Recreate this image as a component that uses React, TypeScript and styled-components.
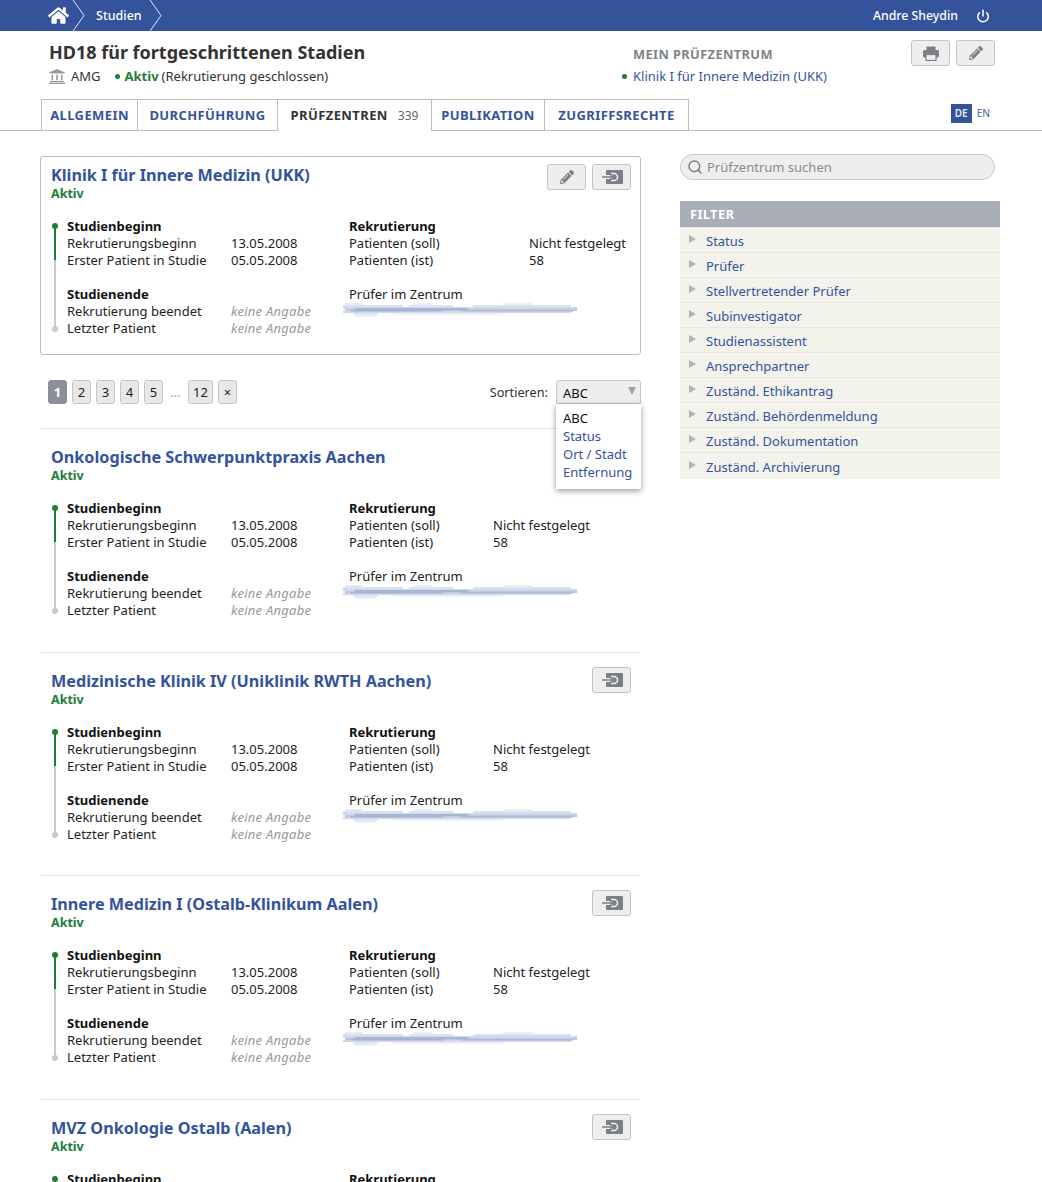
import React from "react";
import styled, { createGlobalStyle } from "styled-components";
import { FaHome, FaPencilAlt } from "react-icons/fa";
import { Power, Search } from "lucide-react";

const blue = "#34539b";
const green = "#1f7d34";

const GlobalStyle = createGlobalStyle`
  html, body { margin: 0; padding: 0; background: #fff; }
  body {
    font-family: "Noto Sans", "Liberation Sans", sans-serif;
    font-size: 13px;
    line-height: 17px;
    color: #222;
    overflow: hidden;
    height: 1182px;
  }
`;

const TopBar = styled.header`
  height: 31px;
  background: ${blue};
  color: #fff;
  display: flex;
  align-items: center;
  justify-content: space-between;
  padding: 0 52px 0 48px;
`;

const Crumbs = styled.nav`
  display: flex;
  align-items: center;
  height: 100%;
`;

const Crumb = styled.span`
  font-size: 12.5px;
  font-weight: 500;
  margin: 0 7px 0 11px;
`;

const Chevron = () => (
  <svg width="13" height="31" viewBox="0 0 13 31" fill="none" stroke="#e4e9f3" strokeWidth="1">
    <path d="M1 0 L12 15.5 L1 31" />
  </svg>
);

const UserBox = styled.div`
  display: flex;
  align-items: center;
  gap: 18px;
  font-size: 12.3px;
  font-weight: 500;
`;

const Head = styled.section`
  display: flex;
  height: 68px;
  padding: 9px 47px 0 49px;
  box-sizing: border-box;
`;

const HeadMain = styled.div`
  width: 573px;
`;

const Title = styled.h1`
  margin: 0;
  font-size: 18px;
  line-height: 24px;
  font-weight: 700;
  color: #333;
`;

const Meta = styled.div`
  display: flex;
  align-items: center;
  margin-top: 4px;
  height: 17px;
  color: #333;
`;

const Dot = styled.i`
  display: inline-block;
  width: 5px;
  height: 5px;
  border-radius: 50%;
  background: ${green};
  margin-right: 5px;
`;

const Amg = styled.span`
  margin: 0 14px 0 6px;
`;

const Active = styled.b`
  color: ${green};
  font-weight: 700;
  margin-right: 3px;
`;

const Center = styled.div`
  padding-top: 6px;
`;

const CenterLabel = styled.div`
  padding-left: 11px;
  font-weight: 700;
  font-size: 12.8px;
  letter-spacing: 0.4px;
  color: #7f8487;
`;

const CenterLink = styled.div`
  margin-top: 5px;
  display: flex;
  align-items: center;
  color: ${blue};

  ${Dot} {
    margin-right: 6px;
  }
`;

const Actions = styled.div`
  display: flex;
  gap: 6px;
`;

const HeadActions = styled(Actions)`
  margin-left: auto;
  margin-top: 0;
`;

const IconButton = styled.button`
  width: 39px;
  height: 26px;
  padding: 0;
  display: flex;
  align-items: center;
  justify-content: center;
  background: #eee;
  border: 1px solid #c4c4c4;
  border-radius: 3px;
  color: #7b7f88;
`;

const TabRow = styled.div`
  display: flex;
  justify-content: space-between;
  align-items: flex-start;
  height: 32px;
  padding: 0 52px 0 41px;
  border-bottom: 1px solid #bdbdbd;
  box-sizing: border-box;
`;

const Tabs = styled.nav`
  display: flex;
  align-items: flex-start;
`;

const Tab = styled.div<{ $active?: boolean; $w: number }>`
  width: ${(p) => p.$w}px;
  height: ${(p) => (p.$active ? 32 : 31)}px;
  box-sizing: border-box;
  border: 1px solid #bdbdbd;
  border-left-width: 0;
  border-bottom: 0;
  background: #fff;
  color: ${(p) => (p.$active ? "#333" : blue)};
  font-weight: 700;
  font-size: 13px;
  letter-spacing: 0.4px;
  display: flex;
  align-items: center;
  justify-content: center;
  padding-bottom: ${(p) => (p.$active ? 1 : 0)}px;
  white-space: nowrap;

  &:first-child {
    border-left-width: 1px;
  }

  small {
    font-size: 12px;
    font-weight: 400;
    color: #666;
    margin-left: 10px;
    letter-spacing: 0;
  }
`;

const Lang = styled.div`
  display: flex;
  align-items: center;
  gap: 5px;
  margin-top: 5px;
  font-size: 10px;
  font-weight: 500;
  color: #5d73a9;
`;

const LangActive = styled.span`
  width: 21px;
  height: 19px;
  line-height: 19px;
  text-align: center;
  font-weight: 600;
  background: ${blue};
  color: #e9ecf5;
`;

const Body = styled.main`
  display: grid;
  grid-template-columns: 601px 320px;
  column-gap: 39px;
  padding: 25px 0 0 40px;
`;

const Featured = styled.article`
  height: 199px;
  box-sizing: border-box;
  border: 1px solid #bcbcbc;
  border-radius: 3px;
  padding: 7px 9px 0 10px;
`;

const ListItem = styled.article`
  margin-left: 1px;
  width: 599px;
  height: 223.67px;
  box-sizing: border-box;
  border-top: 1px solid #e3e3e3;
  padding: 14px 9px 0 10px;
`;

const SiteHead = styled.div<{ $featured?: boolean }>`
  display: flex;
  justify-content: space-between;
  height: ${(p) => (p.$featured ? 21 : 24)}px;
`;

const SiteTitle = styled.h2<{ $featured?: boolean }>`
  margin: 0;
  font-size: 16.2px;
  line-height: 22px;
  padding-top: ${(p) => (p.$featured ? 0 : 3)}px;
  font-weight: 700;
  color: ${blue};
`;

const Status = styled.div`
  height: 17px;
  font-weight: 700;
  font-size: 12.5px;
  color: ${green};
`;

const Columns = styled.div`
  display: flex;
  margin-top: 16px;
  height: 118px;
`;

const Timeline = styled.svg`
  width: 8px;
  height: 114px;
  flex: none;
  margin-right: 8px;
`;

const Col = styled.div<{ $w: number }>`
  width: ${(p) => p.$w}px;
  flex: none;
`;

const Rows = styled.div<{ $first: number }>`
  display: grid;
  grid-template-columns: ${(p) => p.$first}px 1fr;
  grid-auto-rows: 17px;
  white-space: nowrap;

  & + & {
    margin-top: 17px;
  }
`;

const RowHead = styled.strong`
  grid-column: 1 / 3;
  font-weight: 700;
  color: #111;
`;

const RowCaption = styled.span`
  grid-column: 1 / 3;
`;

const Muted = styled.em`
  color: #999;
  font-style: italic;
  letter-spacing: 0.25px;
`;

const Redacted = styled.svg`
  display: block;
  width: 238px;
  height: 14px;
  margin: 0 0 0 -6px;
  filter: blur(0.7px);
`;

const Pager = styled.div`
  display: flex;
  align-items: flex-start;
  justify-content: space-between;
  height: 73px;
  box-sizing: border-box;
  padding: 25px 0 0 8px;
  position: relative;
`;

const Pages = styled.div`
  display: flex;
  gap: 5px;
  align-items: center;
`;

const Page = styled.span<{ $active?: boolean; $w?: number }>`
  width: ${(p) => p.$w || 19}px;
  height: 24px;
  box-sizing: border-box;
  display: flex;
  align-items: center;
  justify-content: center;
  border-radius: 3px;
  border: 1px solid ${(p) => (p.$active ? "#8b8f9a" : "#c6c6c6")};
  background: ${(p) => (p.$active ? "#8b8f9a" : "#e8e8e8")};
  color: ${(p) => (p.$active ? "#fff" : "#222")};
  font-weight: ${(p) => (p.$active ? 700 : 400)};
`;

const Ellipsis = styled.span`
  color: #999;
  width: 15px;
  text-align: center;
  padding-top: 1px;
`;

const SortBox = styled.div`
  display: flex;
  align-items: center;
  gap: 8px;
  font-size: 12.7px;
  color: #333;
`;

const Select = styled.div`
  width: 85px;
  height: 24px;
  box-sizing: border-box;
  border: 1px solid #c6c6c6;
  border-radius: 3px 3px 0 0;
  background: #eee;
  padding: 4px 0 0 6px;
  font-size: 13px;
  color: #111;
  position: relative;

  &::after {
    content: "";
    position: absolute;
    right: 4px;
    top: 6px;
    border-left: 4px solid transparent;
    border-right: 4px solid transparent;
    border-top: 8px solid #a4a4a4;
  }
`;

const Menu = styled.ul`
  position: absolute;
  right: 0;
  top: 49px;
  width: 85px;
  height: 85px;
  box-sizing: border-box;
  margin: 0;
  padding: 5px 0 0 7px;
  list-style: none;
  background: #fff;
  color: ${blue};
  line-height: 18px;
  white-space: nowrap;
  box-shadow: 0 2px 6px rgba(0, 0, 0, 0.4);
  z-index: 2;
`;

const MenuCurrent = styled.li`
  color: #111;
`;

const Side = styled.aside``;

const SearchBox = styled.div`
  width: 315px;
  height: 26px;
  margin-top: -2px;
  box-sizing: border-box;
  border: 1px solid #c8c8c8;
  border-radius: 13px;
  background: #eee;
  display: flex;
  align-items: center;
  gap: 4px;
  padding-left: 6px;
  color: #8a8a8a;
`;

const FilterHead = styled.div`
  margin-top: 21px;
  height: 26px;
  line-height: 27px;
  background: #a9aeb9;
  border-bottom: 1px solid #e7e7e4;
  color: #fff;
  font-weight: 700;
  padding-left: 10px;
  letter-spacing: 0.3px;
`;

const FilterRow = styled.div`
  height: 25px;
  box-sizing: border-box;
  border-bottom: 1px solid #e7e7e4;
  background: #f3f2eb;
  color: ${blue};
  display: flex;
  align-items: center;
  padding: 2px 0 0 9px;
  gap: 10px;

  &:last-child {
    height: 26px;
    border-bottom: 0;
  }

  &::before {
    content: "";
    border-top: 4px solid transparent;
    border-bottom: 4px solid transparent;
    border-left: 7px solid #b1b3b8;
    margin-top: -5px;
  }
`;

const LoginIcon = () => (
  <svg width="22" height="16" viewBox="0 0 22 16">
    <rect x="5" y="1" width="17" height="14" rx="1" fill="#7b7f88" />
    <path d="M10 4.5h3a3.5 3.5 0 0 1 0 7h-3" fill="none" stroke="#eee" strokeWidth="1.6" />
    <path d="M0 8h12" stroke="#eee" strokeWidth="4" />
    <path d="M1 8h11M9 5l3 3-3 3" fill="none" stroke="#7b7f88" strokeWidth="1.5" />
  </svg>
);

const PrintIcon = () => (
  <svg width="16" height="15" viewBox="0 0 16 15">
    <rect x="3.5" y="0.5" width="9" height="4" rx="0.8" fill="#7b7f88" />
    <rect x="0" y="4" width="16" height="7.5" rx="1.6" fill="#7b7f88" />
    <rect x="3" y="8.5" width="10" height="6" fill="#eee" stroke="#7b7f88" strokeWidth="1.2" />
  </svg>
);

const BankIcon = () => (
  <svg width="16" height="15" viewBox="0 0 16 15" fill="#9a9a9a">
    <path d="M8 0 L15.5 3.2 V4.5 H0.5 V3.2 Z" />
    <rect x="2.5" y="5.8" width="1.6" height="5.5" />
    <rect x="7.2" y="5.8" width="1.6" height="5.5" />
    <rect x="11.9" y="5.8" width="1.6" height="5.5" />
    <rect x="1" y="12" width="14" height="1" />
    <rect x="0" y="13.6" width="16" height="1.4" />
  </svg>
);

const TimelineArt = () => (
  <Timeline viewBox="0 0 8 114">
    <rect x="3" y="8" width="2" height="34" fill={green} />
    <rect x="3" y="42" width="2" height="69" fill="#c9c9c9" />
    <circle cx="4" cy="8" r="3" fill={green} />
    <circle cx="4" cy="111" r="3" fill="#c9c9c9" />
  </Timeline>
);

const strokes: [number, number, number, string][] = [
  [1, 2, 20, "#dde2ee"],
  [1, 70, 90, "#e4e8f2"],
  [1, 160, 190, "#e4e8f2"],
  [3, 0, 60, "#d0d7e8"],
  [3, 66, 110, "#d5dceb"],
  [3, 130, 228, "#d0d7e8"],
  [5, 0, 234, "#bfcae0"],
  [6, 12, 125, "#9dacd0"],
  [7, 2, 234, "#a5b3d4"],
  [8, 8, 100, "#9dacd0"],
  [8, 118, 230, "#abb8d7"],
  [9, 0, 228, "#bfcae0"],
  [11, 10, 35, "#d5dceb"],
  [11, 50, 160, "#e8ebf3"],
  [13, 12, 32, "#e4e8f2"],
];

const RedactedNames = () => (
  <Redacted viewBox="0 0 238 14">
    {strokes.map(([y, a, b, c]) => (
      <line key={`${y}-${a}`} x1={a} x2={b} y1={y} y2={y} stroke={c} strokeWidth="1.4" />
    ))}
  </Redacted>
);

function SiteBody({ valueWidth }: { valueWidth: number }) {
  return (
    <Columns>
      <TimelineArt />
      <Col $w={282}>
        <Rows $first={164}>
          <RowHead>Studienbeginn</RowHead>
          <span>Rekrutierungsbeginn</span>
          <span>13.05.2008</span>
          <span>Erster Patient in Studie</span>
          <span>05.05.2008</span>
        </Rows>
        <Rows $first={164}>
          <RowHead>Studienende</RowHead>
          <span>Rekrutierung beendet</span>
          <Muted>keine Angabe</Muted>
          <span>Letzter Patient</span>
          <Muted>keine Angabe</Muted>
        </Rows>
      </Col>
      <Col $w={260}>
        <Rows $first={valueWidth}>
          <RowHead>Rekrutierung</RowHead>
          <span>Patienten (soll)</span>
          <span>Nicht festgelegt</span>
          <span>Patienten (ist)</span>
          <span>58</span>
        </Rows>
        <Rows $first={valueWidth}>
          <RowCaption>Prüfer im Zentrum</RowCaption>
        </Rows>
        <RedactedNames />
      </Col>
    </Columns>
  );
}

const sites: { name: string; login: boolean }[] = [
  { name: "Onkologische Schwerpunktpraxis Aachen", login: false },
  { name: "Medizinische Klinik IV (Uniklinik RWTH Aachen)", login: true },
  { name: "Innere Medizin I (Ostalb-Klinikum Aalen)", login: true },
  { name: "MVZ Onkologie Ostalb (Aalen)", login: true },
];

const filters = [
  "Status",
  "Prüfer",
  "Stellvertretender Prüfer",
  "Subinvestigator",
  "Studienassistent",
  "Ansprechpartner",
  "Zuständ. Ethikantrag",
  "Zuständ. Behördenmeldung",
  "Zuständ. Dokumentation",
  "Zuständ. Archivierung",
];

export default function App() {
  return (
    <>
      <GlobalStyle />
      <TopBar>
        <Crumbs>
          <FaHome size={21} color="#fff" style={{ marginRight: 3 }} />
          <Chevron />
          <Crumb>Studien</Crumb>
          <Chevron />
        </Crumbs>
        <UserBox>
          Andre Sheydin
          <Power size={14} strokeWidth={2.6} />
        </UserBox>
      </TopBar>

      <Head>
        <HeadMain>
          <Title>HD18 für fortgeschrittenen Stadien</Title>
          <Meta>
            <BankIcon />
            <Amg>AMG</Amg>
            <Dot />
            <Active>Aktiv</Active>
            (Rekrutierung geschlossen)
          </Meta>
        </HeadMain>
        <Center>
          <CenterLabel>MEIN PRÜFZENTRUM</CenterLabel>
          <CenterLink>
            <Dot />
            Klinik I für Innere Medizin (UKK)
          </CenterLink>
        </Center>
        <HeadActions>
          <IconButton>
            <PrintIcon />
          </IconButton>
          <IconButton>
            <FaPencilAlt size={14} />
          </IconButton>
        </HeadActions>
      </Head>

      <TabRow>
        <Tabs>
          <Tab $w={97}>ALLGEMEIN</Tab>
          <Tab $w={140}>DURCHFÜHRUNG</Tab>
          <Tab $w={154} $active>
            PRÜFZENTREN <small>339</small>
          </Tab>
          <Tab $w={113}>PUBLIKATION</Tab>
          <Tab $w={144}>ZUGRIFFSRECHTE</Tab>
        </Tabs>
        <Lang>
          <LangActive>DE</LangActive>
          <span>EN</span>
        </Lang>
      </TabRow>

      <Body>
        <div>
          <Featured>
            <SiteHead $featured>
              <SiteTitle $featured>Klinik I für Innere Medizin (UKK)</SiteTitle>
              <Actions>
                <IconButton>
                  <FaPencilAlt size={14} />
                </IconButton>
                <IconButton>
                  <LoginIcon />
                </IconButton>
              </Actions>
            </SiteHead>
            <Status>Aktiv</Status>
            <SiteBody valueWidth={180} />
          </Featured>

          <Pager>
            <Pages>
              <Page $active>1</Page>
              <Page>2</Page>
              <Page>3</Page>
              <Page>4</Page>
              <Page>5</Page>
              <Ellipsis>…</Ellipsis>
              <Page $w={25}>12</Page>
              <Page>×</Page>
            </Pages>
            <SortBox>
              Sortieren:
              <Select>ABC</Select>
            </SortBox>
            <Menu>
              <MenuCurrent>ABC</MenuCurrent>
              <li>Status</li>
              <li>Ort / Stadt</li>
              <li>Entfernung</li>
            </Menu>
          </Pager>

          {sites.map((site) => (
            <ListItem key={site.name}>
              <SiteHead>
                <SiteTitle>{site.name}</SiteTitle>
                {site.login && (
                  <IconButton>
                    <LoginIcon />
                  </IconButton>
                )}
              </SiteHead>
              <Status>Aktiv</Status>
              <SiteBody valueWidth={144} />
            </ListItem>
          ))}
        </div>

        <Side>
          <SearchBox>
            <Search size={16} color="#7d7d7d" strokeWidth={2.2} />
            Prüfzentrum suchen
          </SearchBox>
          <FilterHead>FILTER</FilterHead>
          {filters.map((f) => (
            <FilterRow key={f}>{f}</FilterRow>
          ))}
        </Side>
      </Body>
    </>
  );
}
